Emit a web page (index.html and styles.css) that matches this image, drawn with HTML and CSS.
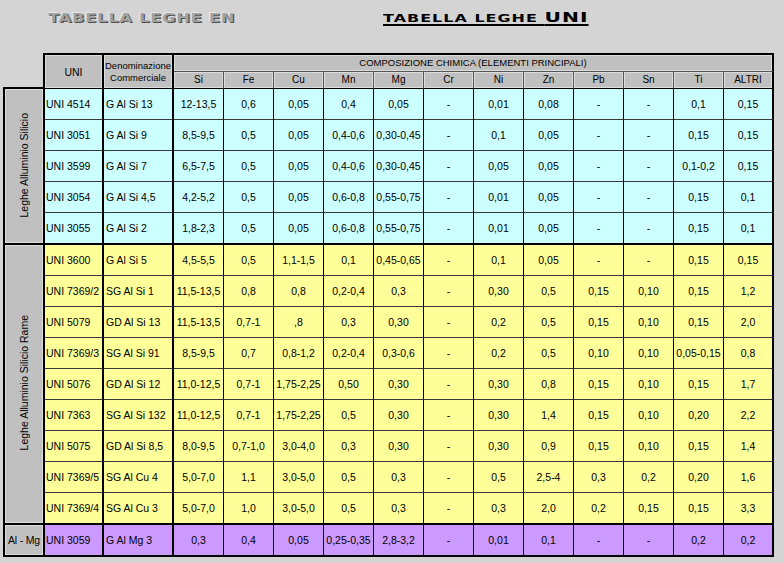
FILE: index.html
```html
<!DOCTYPE html>
<html lang="it">
<head>
<meta charset="utf-8">
<title>Tabella leghe UNI</title>
<link rel="stylesheet" href="styles.css">
</head>
<body>
<div class="page">
  <header class="titles">
    <div class="slot slot-en"><span class="title title-en">TABELLA LEGHE EN</span></div>
    <div class="slot slot-uni"><span class="title title-uni"><span class="title-small">TABELLA LEGHE </span>UNI</span></div>
  </header>

  <table class="alloys">
    <colgroup>
      <col class="c-group">
      <col class="c-uni">
      <col class="c-den">
      <col class="c-el" span="12">
    </colgroup>
    <thead>
      <tr class="h1">
        <th class="corner" rowspan="2"></th>
        <th class="hd hd-uni" rowspan="2">UNI</th>
        <th class="hd hd-den" rowspan="2">Denominazione<br>Commerciale</th>
        <th class="hd hd-comp" colspan="12">COMPOSIZIONE CHIMICA (ELEMENTI PRINCIPALI)</th>
      </tr>
      <tr class="h2">
        <th class="hd el">Si</th><th class="hd el">Fe</th><th class="hd el">Cu</th><th class="hd el">Mn</th>
        <th class="hd el">Mg</th><th class="hd el">Cr</th><th class="hd el">Ni</th><th class="hd el">Zn</th>
        <th class="hd el">Pb</th><th class="hd el">Sn</th><th class="hd el">Ti</th><th class="hd el last">ALTRI</th>
      </tr>
    </thead>
    <tbody>
      <tr class="row cyan">
        <th class="grp" rowspan="5"><span class="vlabel">Leghe Alluminio Silicio</span></th>
        <td class="uni">UNI 4514</td><td class="den">G Al Si 13</td>
        <td>12-13,5</td><td>0,6</td><td>0,05</td><td>0,4</td><td>0,05</td><td>-</td><td>0,01</td><td>0,08</td><td>-</td><td>-</td><td>0,1</td><td class="last">0,15</td>
      </tr>
      <tr class="row cyan">
        <td class="uni">UNI 3051</td><td class="den">G Al Si 9</td>
        <td>8,5-9,5</td><td>0,5</td><td>0,05</td><td>0,4-0,6</td><td>0,30-0,45</td><td>-</td><td>0,1</td><td>0,05</td><td>-</td><td>-</td><td>0,15</td><td class="last">0,15</td>
      </tr>
      <tr class="row cyan">
        <td class="uni">UNI 3599</td><td class="den">G Al Si 7</td>
        <td>6,5-7,5</td><td>0,5</td><td>0,05</td><td>0,4-0,6</td><td>0,30-0,45</td><td>-</td><td>0,05</td><td>0,05</td><td>-</td><td>-</td><td>0,1-0,2</td><td class="last">0,15</td>
      </tr>
      <tr class="row cyan">
        <td class="uni">UNI 3054</td><td class="den">G Al Si 4,5</td>
        <td>4,2-5,2</td><td>0,5</td><td>0,05</td><td>0,6-0,8</td><td>0,55-0,75</td><td>-</td><td>0,01</td><td>0,05</td><td>-</td><td>-</td><td>0,15</td><td class="last">0,1</td>
      </tr>
      <tr class="row cyan end">
        <td class="uni">UNI 3055</td><td class="den">G Al Si 2</td>
        <td>1,8-2,3</td><td>0,5</td><td>0,05</td><td>0,6-0,8</td><td>0,55-0,75</td><td>-</td><td>0,01</td><td>0,05</td><td>-</td><td>-</td><td>0,15</td><td class="last">0,1</td>
      </tr>

      <tr class="row yellow">
        <th class="grp" rowspan="9"><span class="vlabel">Leghe Alluminio Silicio Rame</span></th>
        <td class="uni">UNI 3600</td><td class="den">G Al Si 5</td>
        <td>4,5-5,5</td><td>0,5</td><td>1,1-1,5</td><td>0,1</td><td>0,45-0,65</td><td>-</td><td>0,1</td><td>0,05</td><td>-</td><td>-</td><td>0,15</td><td class="last">0,15</td>
      </tr>
      <tr class="row yellow">
        <td class="uni">UNI 7369/2</td><td class="den">SG Al Si 1</td>
        <td>11,5-13,5</td><td>0,8</td><td>0,8</td><td>0,2-0,4</td><td>0,3</td><td>-</td><td>0,30</td><td>0,5</td><td>0,15</td><td>0,10</td><td>0,15</td><td class="last">1,2</td>
      </tr>
      <tr class="row yellow">
        <td class="uni">UNI 5079</td><td class="den">GD Al Si 13</td>
        <td>11,5-13,5</td><td>0,7-1</td><td>,8</td><td>0,3</td><td>0,30</td><td>-</td><td>0,2</td><td>0,5</td><td>0,15</td><td>0,10</td><td>0,15</td><td class="last">2,0</td>
      </tr>
      <tr class="row yellow">
        <td class="uni">UNI 7369/3</td><td class="den">SG Al Si 91</td>
        <td>8,5-9,5</td><td>0,7</td><td>0,8-1,2</td><td>0,2-0,4</td><td>0,3-0,6</td><td>-</td><td>0,2</td><td>0,5</td><td>0,10</td><td>0,10</td><td>0,05-0,15</td><td class="last">0,8</td>
      </tr>
      <tr class="row yellow">
        <td class="uni">UNI 5076</td><td class="den">GD Al Si 12</td>
        <td>11,0-12,5</td><td>0,7-1</td><td>1,75-2,25</td><td>0,50</td><td>0,30</td><td>-</td><td>0,30</td><td>0,8</td><td>0,15</td><td>0,10</td><td>0,15</td><td class="last">1,7</td>
      </tr>
      <tr class="row yellow">
        <td class="uni">UNI 7363</td><td class="den">SG Al Si 132</td>
        <td>11,0-12,5</td><td>0,7-1</td><td>1,75-2,25</td><td>0,5</td><td>0,30</td><td>-</td><td>0,30</td><td>1,4</td><td>0,15</td><td>0,10</td><td>0,20</td><td class="last">2,2</td>
      </tr>
      <tr class="row yellow">
        <td class="uni">UNI 5075</td><td class="den">GD Al Si 8,5</td>
        <td>8,0-9,5</td><td>0,7-1,0</td><td>3,0-4,0</td><td>0,3</td><td>0,30</td><td>-</td><td>0,30</td><td>0,9</td><td>0,15</td><td>0,10</td><td>0,15</td><td class="last">1,4</td>
      </tr>
      <tr class="row yellow">
        <td class="uni">UNI 7369/5</td><td class="den">SG Al Cu 4</td>
        <td>5,0-7,0</td><td>1,1</td><td>3,0-5,0</td><td>0,5</td><td>0,3</td><td>-</td><td>0,5</td><td>2,5-4</td><td>0,3</td><td>0,2</td><td>0,20</td><td class="last">1,6</td>
      </tr>
      <tr class="row yellow end">
        <td class="uni">UNI 7369/4</td><td class="den">SG Al Cu 3</td>
        <td>5,0-7,0</td><td>1,0</td><td>3,0-5,0</td><td>0,5</td><td>0,3</td><td>-</td><td>0,3</td><td>2,0</td><td>0,2</td><td>0,15</td><td>0,15</td><td class="last">3,3</td>
      </tr>

      <tr class="row purple end">
        <th class="grp grp-h">Al - Mg</th>
        <td class="uni">UNI 3059</td><td class="den">G Al Mg 3</td>
        <td>0,3</td><td>0,4</td><td>0,05</td><td>0,25-0,35</td><td>2,8-3,2</td><td>-</td><td>0,01</td><td>0,1</td><td>-</td><td>-</td><td>0,2</td><td class="last">0,2</td>
      </tr>
    </tbody>
  </table>
</div>
</body>
</html>
```
FILE: styles.css
```css
html, body {
  margin: 0;
  padding: 0;
  background: #d4d4d4;
}

body {
  font-family: "Liberation Sans", Arial, sans-serif;
  color: #000;
}

.page {
  width: 784px;
}

/* ---------- titles ---------- */
.titles {
  display: flex;
  align-items: baseline;
  height: 53px;
  box-sizing: border-box;
  padding: 8px 0 0 48px;
}

.slot-en {
  flex: 0 0 335px;
}

.title {
  display: inline-block;
  font-family: "DejaVu Sans", sans-serif;
  font-weight: bold;
  line-height: 16px;
  transform-origin: 0 50%;
  white-space: nowrap;
}

.title-en {
  font-size: 12.5px;
  letter-spacing: 0.6px;
  color: #a2a2a2;
  text-shadow: 1px 1px 0 #505050, -1px -1px 0 #e4e4e4;
  transform: scaleX(1.3);
}

.title-uni {
  font-size: 14px;
  letter-spacing: 0.7px;
  color: #000;
  text-decoration: underline;
  text-decoration-thickness: 2px;
  text-underline-offset: 2px;
  transform: scaleX(1.45);
}

.title-small {
  font-size: 11px;
}

/* ---------- table ---------- */
.alloys {
  margin-left: 3px;
  width: 771px;
  table-layout: fixed;
  border-collapse: separate;
  border-spacing: 0;
  font-size: 10.5px;
}

.c-group { width: 42px; }
.c-uni   { width: 59px; }
.c-den   { width: 70px; }
.c-el    { width: 50px; }

.alloys th,
.alloys td {
  padding: 0;
  box-sizing: border-box;
  white-space: nowrap;
  text-align: center;
  vertical-align: middle;
  font-weight: normal;
}

/* header */
.h1 { height: 19px; }
.h2 { height: 17px; }

.corner {
  background: transparent;
  border-right: 2px solid #000;
  border-bottom: 2px solid #000;
}

.hd {
  background: #c0c0c0;
  box-shadow: inset 0 0 0 1px #dcdcdc;
  font-size: 9.5px;
  line-height: 12px;
}

.hd-uni,
.hd-den {
  border-top: 2px solid #000;
  border-right: 2px solid #000;
  border-bottom: 1px solid #000;
}

.hd-uni {
  font-size: 10.5px;
}

.hd-comp {
  border-top: 2px solid #000;
  border-right: 2px solid #000;
  border-bottom: 1px solid #555;
}

.hd.el {
  border-right: 1px solid #555;
  border-bottom: 1px solid #000;
  font-size: 10px;
}

.hd.el.last {
  border-right: 2px solid #000;
}

/* group column */
.grp {
  background: #c0c0c0;
  box-shadow: inset 0 0 0 1px #dcdcdc;
  border-left: 2px solid #000;
  border-right: 2px solid #000;
  border-bottom: 2px solid #000;
  font-size: 10.5px;
}

.vlabel {
  display: inline-block;
  writing-mode: vertical-rl;
  transform: rotate(180deg);
}

.grp-h {
  letter-spacing: -0.2px;
}

/* data rows */
.row { height: 31px; }
.row.end { height: 32px; }

.cyan td   { background: #ccffff; }
.yellow td { background: #ffff99; }
.purple td { background: #cc99ff; }

.row td {
  border-right: 1px solid #000;
  border-bottom: 1px solid #3a3a3a;
}

.row.end td {
  border-bottom: 2px solid #000;
}

.row td.uni {
  text-align: left;
  padding-left: 1px;
  border-right: 2px solid #000;
}

.row td.den {
  text-align: left;
  padding-left: 2px;
  border-right: 2px solid #000;
}

.row td.last {
  border-right: 2px solid #000;
}
```
